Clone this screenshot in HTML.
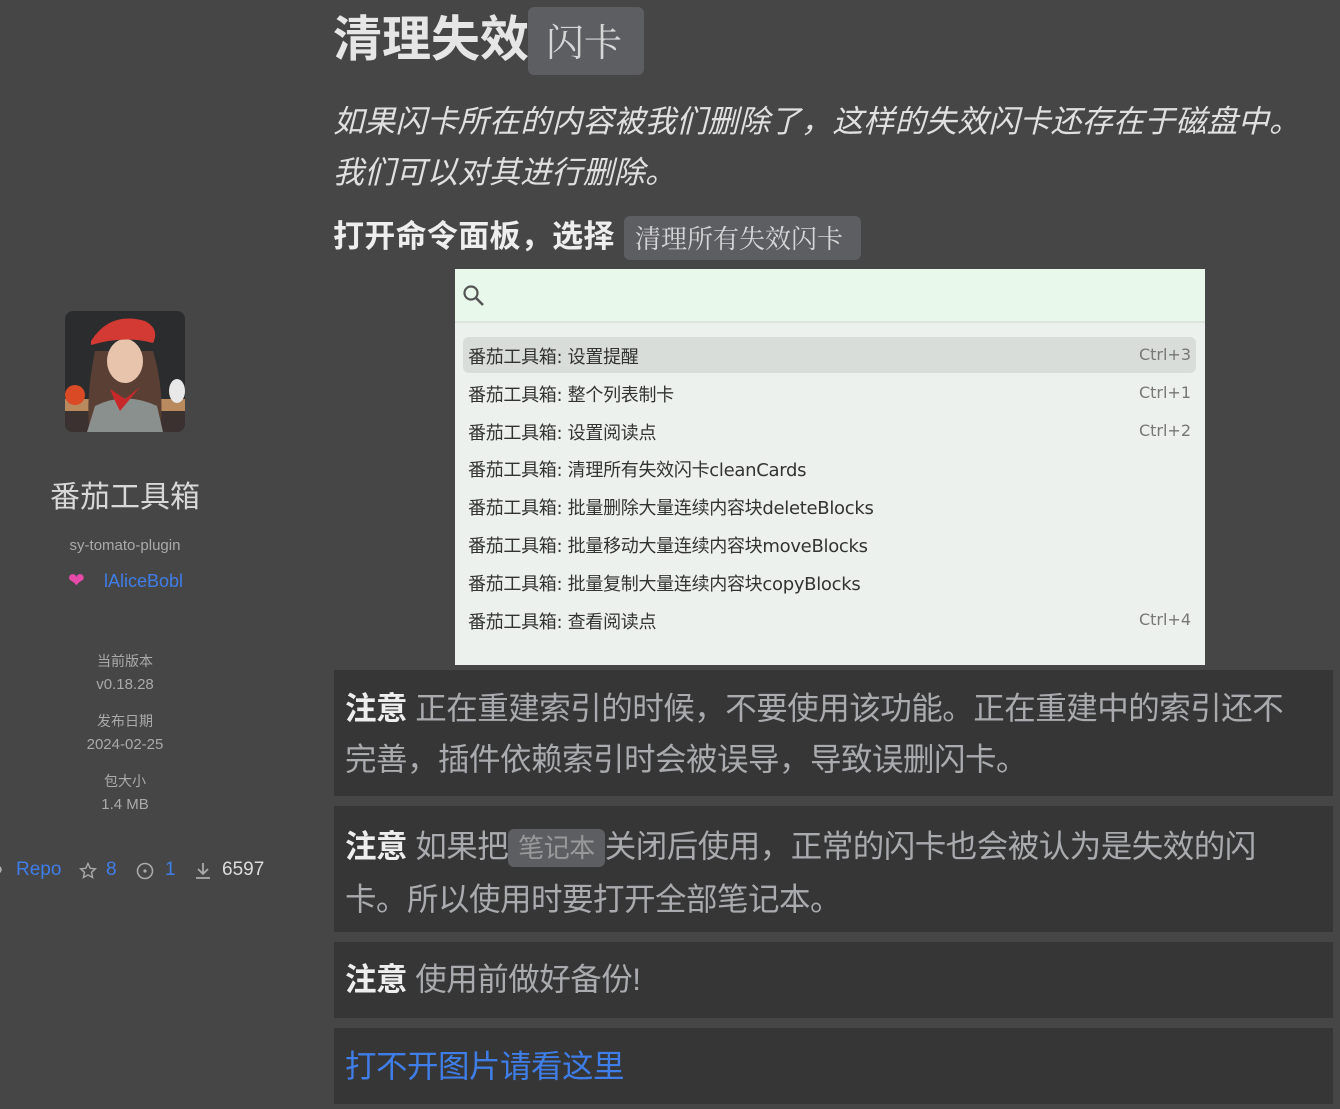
<!DOCTYPE html>
<html><head><meta charset="utf-8"><style>
*{margin:0;padding:0;box-sizing:border-box}
body{width:1340px;height:1109px;background:#464646;font-family:"Liberation Sans","Noto Sans CJK SC",sans-serif;color:#d8d8d8;position:relative;overflow:hidden}
.a{position:absolute;white-space:nowrap}
.c{text-align:center;width:250px;left:0}
.code{background:#5d5e61;border-radius:6px;font-family:"Noto Serif CJK SC",serif;font-weight:400;color:#d6d6d6}
.note{position:absolute;left:334px;width:999px;background:#363636;padding:0 11px;font-size:31.5px;line-height:51px;color:#a9abae;letter-spacing:-0.5px}
.note b{color:#eee}
.item{position:absolute;left:468px;font-size:18px;color:#333;font-family:"DejaVu Sans","Noto Sans CJK SC",sans-serif;letter-spacing:-0.3px}
.k{position:absolute;right:149px;font-size:16px;color:#777;font-family:"DejaVu Sans",sans-serif}
</style></head><body>
<svg class="a" style="left:65px;top:311px" width="120" height="121" viewBox="0 0 120 121">
<defs><clipPath id="r"><rect width="120" height="121" rx="8"/></clipPath></defs>
<g clip-path="url(#r)">
<rect width="120" height="121" fill="#2a2c2d"/>
<rect y="90" width="120" height="31" fill="#3b3130"/>
<rect x="0" y="88" width="120" height="12" fill="#b98a5e"/>
<path d="M30 40 Q20 90 25 121 L95 121 Q100 80 88 40 Z" fill="#5a4034"/>
<path d="M30 95 Q60 80 92 95 L98 121 L22 121 Z" fill="#8a908e"/>
<ellipse cx="60" cy="50" rx="18" ry="22" fill="#e9c4ad"/>
<path d="M26 30 Q45 0 80 10 Q95 18 88 32 Q60 24 26 34 Z" fill="#d23a33"/>
<path d="M45 78 L60 88 L75 76 L70 82 L55 100 L50 90 Z" fill="#c8282a"/>
<circle cx="10" cy="84" r="10" fill="#d94a25"/>
<ellipse cx="112" cy="80" rx="8" ry="12" fill="#e8e8e8"/>
</g></svg>
<div class="a c" style="top:472px;font-size:30px;color:#d8d8d8">番茄工具箱</div>
<div class="a c" style="top:537px;font-size:15px;color:#aaa">sy-tomato-plugin</div>
<div class="a" style="left:68px;top:568px;font-size:20px;color:#e84aa9">❤</div>
<div class="a" style="left:104px;top:571px;font-size:18px;color:#3f7ee8">lAliceBobl</div>
<div class="a c" style="top:651px;font-size:14px;color:#aaa">当前版本</div>
<div class="a c" style="top:676px;font-size:15px;color:#aaa">v0.18.28</div>
<div class="a c" style="top:711px;font-size:14px;color:#aaa">发布日期</div>
<div class="a c" style="top:736px;font-size:15px;color:#aaa">2024-02-25</div>
<div class="a c" style="top:771px;font-size:14px;color:#aaa">包大小</div>
<div class="a c" style="top:796px;font-size:15px;color:#aaa">1.4 MB</div>
<div class="a" style="left:-8px;top:859px;font-size:19px;color:#aaa">●</div>
<div class="a" style="left:16px;top:859px;font-size:19px;color:#3f7ee8">Repo</div>
<svg class="a" style="left:79px;top:862px" width="18" height="18"><path d="M9 1.5l2.2 4.8 5.2.5-3.9 3.5 1.1 5.2L9 12.9l-4.6 2.6 1.1-5.2L1.6 6.8l5.2-.5z" fill="none" stroke="#aaa" stroke-width="1.4"/></svg>
<div class="a" style="left:106px;top:859px;font-size:19px;color:#3f7ee8">8</div>
<svg class="a" style="left:136px;top:862px" width="18" height="18"><circle cx="9" cy="9" r="7.5" fill="none" stroke="#aaa" stroke-width="1.6"/><circle cx="9" cy="9" r="1.6" fill="#aaa"/></svg>
<div class="a" style="left:165px;top:859px;font-size:19px;color:#3f7ee8">1</div>
<svg class="a" style="left:194px;top:861px" width="18" height="20"><path d="M9 2v11M4 8l5 5 5-5M2 17h14" fill="none" stroke="#aaa" stroke-width="1.8"/></svg>
<div class="a" style="left:222px;top:859px;font-size:19px;color:#ddd">6597</div>

<div class="a" style="left:333px;top:10px;font-size:49px;font-weight:bold;color:#e6e6e6;line-height:60px">清理失效</div>
<div class="a code" style="left:528px;top:7px;width:116px;height:68px;font-size:38px;line-height:66px;padding-left:18px">闪卡</div>
<div class="a" style="left:333px;top:96px;font-size:31px;font-style:italic;line-height:51px;color:#e0e0e0;letter-spacing:0.2px">如果闪卡所在的内容被我们删除了，这样的失效闪卡还存在于磁盘中。<br>我们可以对其进行删除。</div>
<div class="a" style="left:333px;top:216px;font-size:31px;font-weight:bold;line-height:42px;color:#eee;letter-spacing:0.3px">打开命令面板，选择</div>
<div class="a code" style="left:624px;top:216px;width:237px;height:44px;font-size:26px;line-height:44px;padding-left:11px">清理所有失效闪卡</div>

<div class="a" style="left:455px;top:269px;width:750px;height:396px;background:#edf1ed"></div>
<div class="a" style="left:455px;top:269px;width:750px;height:54px;background:#e8f8ea;border-bottom:2px solid #dde3dd"></div>
<svg class="a" style="left:462px;top:284px" width="24" height="24"><circle cx="9" cy="9" r="6.5" fill="none" stroke="#555" stroke-width="2.2"/><path d="M14 14l7 7" stroke="#555" stroke-width="2.6"/></svg>
<div class="a" style="left:463px;top:337px;width:733px;height:36px;background:#d9ddd9;border-radius:6px"></div>
<div class="item" style="top:343px">番茄工具箱: 设置提醒</div><div class="k" style="top:345px">Ctrl+3</div>
<div class="item" style="top:381px">番茄工具箱: 整个列表制卡</div><div class="k" style="top:383px">Ctrl+1</div>
<div class="item" style="top:419px">番茄工具箱: 设置阅读点</div><div class="k" style="top:421px">Ctrl+2</div>
<div class="item" style="top:456px">番茄工具箱: 清理所有失效闪卡cleanCards</div>
<div class="item" style="top:494px">番茄工具箱: 批量删除大量连续内容块deleteBlocks</div>
<div class="item" style="top:532px">番茄工具箱: 批量移动大量连续内容块moveBlocks</div>
<div class="item" style="top:570px">番茄工具箱: 批量复制大量连续内容块copyBlocks</div>
<div class="item" style="top:608px">番茄工具箱: 查看阅读点</div><div class="k" style="top:610px">Ctrl+4</div>

<div class="note" style="top:670px;height:126px;padding-top:13px;padding-right:40px"><b>注意</b> 正在重建索引的时候，不要使用该功能。正在重建中的索引还不完善，插件依赖索引时会被误导，导致误删闪卡。</div>
<div class="note" style="top:806px;height:126px;padding-top:15px;padding-right:50px"><b>注意</b> 如果把<span class="code" style="font-family:'Liberation Sans','Noto Sans CJK SC',sans-serif;font-size:26px;padding:4px 10px;color:#999">笔记本</span>关闭后使用，正常的闪卡也会被认为是失效的闪卡。所以使用时要打开全部笔记本。</div>
<div class="note" style="top:942px;height:76px;padding-top:12px"><b>注意</b> 使用前做好备份!</div>
<div class="note" style="top:1028px;height:76px;padding-top:13px;color:#3f7ee8">打不开图片请看这里</div>
</body></html>
